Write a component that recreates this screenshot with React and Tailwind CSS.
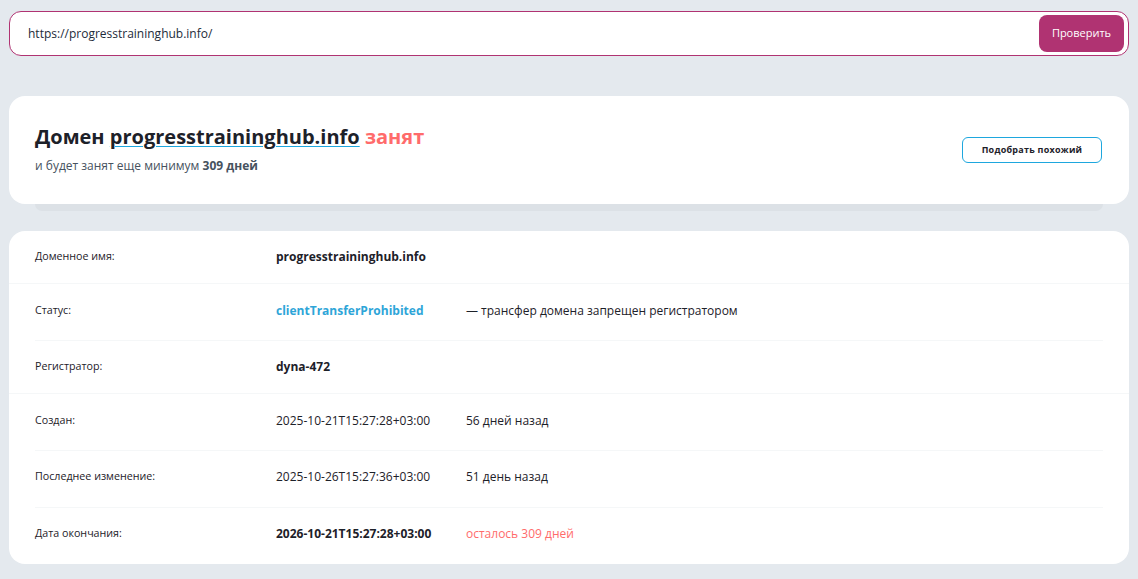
const ROWS = [
  { label: 'Доменное имя:', value: 'progresstraininghub.info', valueClass: 'font-bold text-[#1d2129]', height: 'h-[53px]', shift: 'pb-0', line: 'mx-0' },
  { label: 'Статус:', value: 'clientTransferProhibited', valueClass: 'font-bold text-[#2ea5d8]', note: '— трансфер домена запрещен регистратором', height: 'h-[57px]', shift: 'pb-[3px]', line: 'mx-[26px]' },
  { label: 'Регистратор:', value: 'dyna-472', valueClass: 'font-bold text-[#1d2129]', height: 'h-[53px]', shift: 'pb-0', line: 'mx-0' },
  { label: 'Создан:', value: '2025-10-21T15:27:28+03:00', valueClass: 'text-[#1d2129]', note: '56 дней назад', height: 'h-[57px]', shift: 'pb-[3px]', line: 'mx-[26px]' },
  { label: 'Последнее изменение:', value: '2025-10-26T15:27:36+03:00', valueClass: 'text-[#1d2129]', note: '51 день назад', height: 'h-[57px]', shift: 'pb-[4px]', line: 'mx-[26px]' },
  { label: 'Дата окончания:', value: '2026-10-21T15:27:28+03:00', valueClass: 'font-bold text-[#1d2129]', note: 'осталось 309 дней', noteClass: 'text-[#ff6b6b]', height: 'h-[56px]', shift: 'pb-[4px]' },
];

function Row({ row }) {
  return (
    <div className={`flex flex-col ${row.height}`}>
      <div className={`flex flex-1 items-center pl-[26px] ${row.shift}`}>
        <div className="w-[241px] pb-px text-[10.7px] text-[#1d2129]">{row.label}</div>
        <div className={`w-[190px] text-xs ${row.valueClass}`}>{row.value}</div>
        {row.note && <div className={`text-xs ${row.noteClass || 'text-[#1d2129]'}`}>{row.note}</div>}
      </div>
      {row.line && <div className={`h-px bg-[#f5f7f8] ${row.line}`} />}
    </div>
  );
}

export default function App() {
  return (
    <div className="h-[579px] overflow-hidden bg-[#e4e9ee] px-[9px] pt-[11px] font-['Open_Sans',sans-serif]">
      <div className="flex h-[45px] items-center justify-between rounded-xl border border-[#b03372] bg-white pl-[18px] pr-1">
        <span className="text-xs text-[#1d2b3a]">https://progresstraininghub.info/</span>
        <button className="h-[37px] w-[85px] rounded-lg bg-[#b03372] text-[11px] font-medium text-white">Проверить</button>
      </div>

      <div className="mt-10">
        <div className="flex h-[108px] items-center justify-between rounded-2xl bg-white pl-[26px] pr-[27px]">
          <div className="pb-1">
            <h1 className="text-xl leading-[27px] font-bold text-[#1d2129]">
              Домен{' '}
              <span className="underline decoration-[#1ea7de] decoration-1 underline-offset-2">progresstraininghub.info</span>{' '}
              <span className="text-[#ff6b6b]">занят</span>
            </h1>
            <p className="mt-2 text-xs text-[#46525e]">
              и будет занят еще минимум <b className="font-bold">309 дней</b>
            </p>
          </div>
          <button className="h-[26px] w-[140px] rounded-md border border-[#1ea7de] bg-white text-[9px] font-bold tracking-[0.25px] text-[#1d2129]">
            Подобрать похожий
          </button>
        </div>
        <div className="mx-[26px] h-[7px] rounded-b-lg bg-[#dce1e6]" />
      </div>

      <div className="mt-5 h-[333px] rounded-2xl bg-white">
        {ROWS.map((row) => (
          <Row key={row.label} row={row} />
        ))}
      </div>
    </div>
  );
}
